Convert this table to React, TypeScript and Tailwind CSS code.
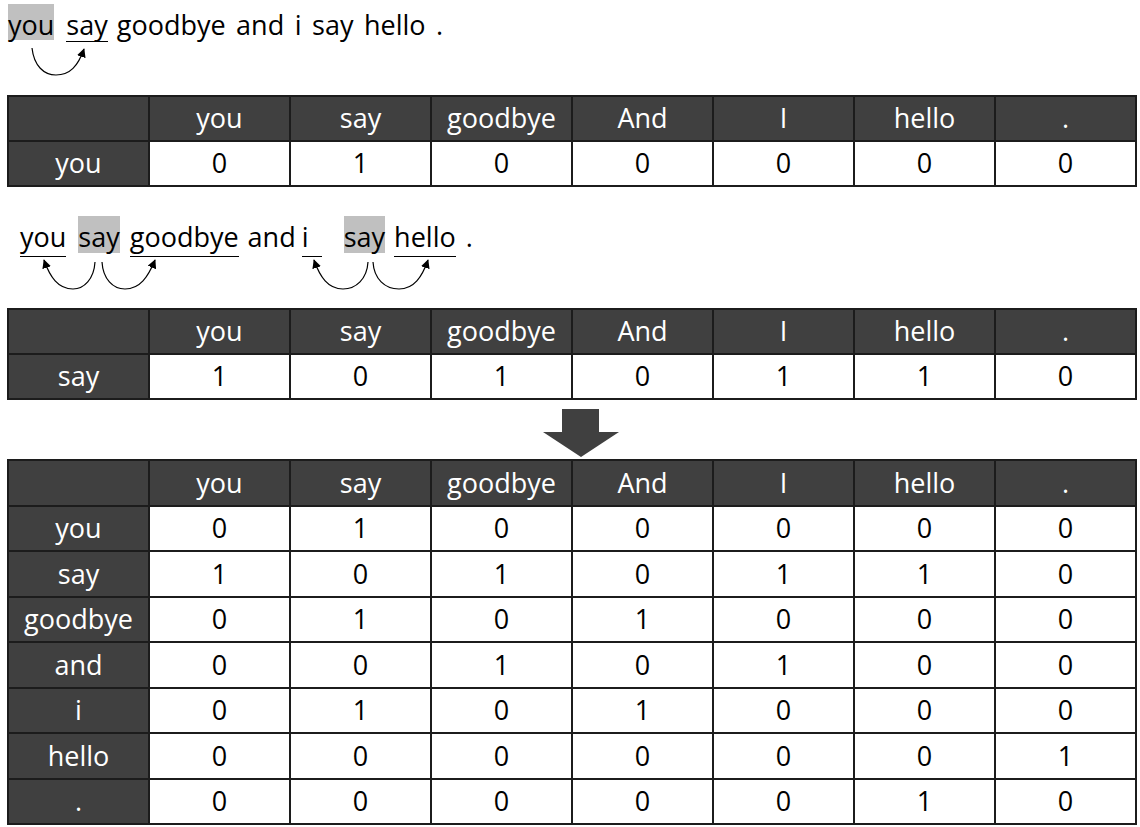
import React from "react";

const FONT = "font-['Open_Sans','Noto_Sans',sans-serif]";

const headers = ["you", "say", "goodbye", "And", "I", "hello", "."];

type Row = { label: string; values: number[] };

function Table({ rows, rowH }: { rows: Row[]; rowH: string }) {
  return (
    <div className={`ml-[7px] grid w-fit grid-cols-[repeat(8,139px)] gap-[2px] bg-[#1c1c1c] p-[2px] ${FONT} text-[27px]`}>
      <div className={`${rowH} bg-[#404040]`} />
      {headers.map((h, i) => (
        <div key={i} className={`${rowH} flex items-center justify-center bg-[#404040] text-white`}>
          {h}
        </div>
      ))}
      {rows.map((r, ri) => (
        <React.Fragment key={ri}>
          <div className={`${rowH} flex items-center justify-center bg-[#404040] text-white`}>{r.label}</div>
          {r.values.map((v, vi) => (
            <div key={vi} className={`${rowH} flex items-center justify-center bg-white text-black`}>
              {v}
            </div>
          ))}
        </React.Fragment>
      ))}
    </div>
  );
}

function Marker({ id }: { id: string }) {
  return (
    <defs>
      <marker id={id} viewBox="0 0 10 10" refX="9" refY="5" markerWidth="9" markerHeight="9" markerUnits="userSpaceOnUse" orient="auto">
        <path d="M0 0 L10 5 L0 10 z" fill="#000" />
      </marker>
    </defs>
  );
}

export default function App() {
  const full: Row[] = [
    { label: "you", values: [0, 1, 0, 0, 0, 0, 0] },
    { label: "say", values: [1, 0, 1, 0, 1, 1, 0] },
    { label: "goodbye", values: [0, 1, 0, 1, 0, 0, 0] },
    { label: "and", values: [0, 0, 1, 0, 1, 0, 0] },
    { label: "i", values: [0, 1, 0, 1, 0, 0, 0] },
    { label: "hello", values: [0, 0, 0, 0, 0, 0, 1] },
    { label: ".", values: [0, 0, 0, 0, 0, 1, 0] },
  ];
  return (
    <div className={`h-[827px] w-[1140px] overflow-hidden bg-white text-black ${FONT}`}>
      {/* Sentence 1 */}
      <div className="relative h-[95px]">
        <div className="flex items-start pl-[8px] pt-[4px] text-[27px] leading-[31px]">
          <span className="h-[36px] bg-[#c0c0c0] pt-[5px]">you</span>
          <span className="ml-[12px] h-[38px] border-b-[1.5px] border-black pt-[5px]">say</span>
          <span className="ml-[9px] whitespace-pre pt-[5px] [word-spacing:3.5px]">goodbye and i say hello .</span>
        </div>
        <svg className="absolute inset-0" width="1140" height="95">
          <Marker id="m1" />
          <path d="M32 48 C 34 66, 44 75, 56 75 C 70 75, 78 66, 84 49" fill="none" stroke="#000" strokeWidth="1.2" markerEnd="url(#m1)" />
        </svg>
      </div>

      <Table rows={[{ label: "you", values: [0, 1, 0, 0, 0, 0, 0] }]} rowH="h-[43px]" />

      {/* Sentence 2 */}
      <div className="relative h-[121px]">
        <div className="flex items-start pl-[20px] pt-[29px] text-[27px] leading-[32px]">
          <span className="h-[41px] border-b-[1.5px] border-black pt-[5px]">you</span>
          <span className="ml-[12px] h-[37px] bg-[#c0c0c0] pt-[5px]">say</span>
          <span className="ml-[10px] h-[41px] border-b-[1.5px] border-black pt-[5px]">goodbye</span>
          <span className="ml-[9px] pt-[5px]">and</span>
          <span className="ml-[6px] h-[41px] w-[20px] border-b-[1.5px] border-black pt-[5px]">i</span>
          <span className="ml-[22px] h-[37px] bg-[#c0c0c0] pt-[5px]">say</span>
          <span className="ml-[9px] h-[41px] border-b-[1.5px] border-black pt-[5px]">hello</span>
          <span className="ml-[10px] pt-[5px]">.</span>
        </div>
        <svg className="absolute inset-0" width="1140" height="121">
          <Marker id="m2" />
          <g fill="none" stroke="#000" strokeWidth="1.2">
            <path d="M95 75 C 94 92, 84 102, 73 102 C 58 102, 50 90, 44 73" markerEnd="url(#m2)" />
            <path d="M102 75 C 103 92, 113 102, 125 102 C 140 102, 148 90, 155 73" markerEnd="url(#m2)" />
            <path d="M368 75 C 367 92, 356 102, 343 102 C 328 102, 320 90, 314 73" markerEnd="url(#m2)" />
            <path d="M373 75 C 374 92, 385 102, 399 102 C 414 102, 422 90, 428 73" markerEnd="url(#m2)" />
          </g>
        </svg>
      </div>

      <Table rows={[{ label: "say", values: [1, 0, 1, 0, 1, 1, 0] }]} rowH="h-[43px]" />

      {/* Down arrow */}
      <div className="relative h-[59px]">
        <svg className="absolute inset-0" width="1140" height="59">
          <path d="M562 9 H599 V32 H619 L581 57 L543 32 H562 Z" fill="#404040" />
        </svg>
      </div>

      <Table rows={full} rowH="h-[43.5px]" />
    </div>
  );
}
